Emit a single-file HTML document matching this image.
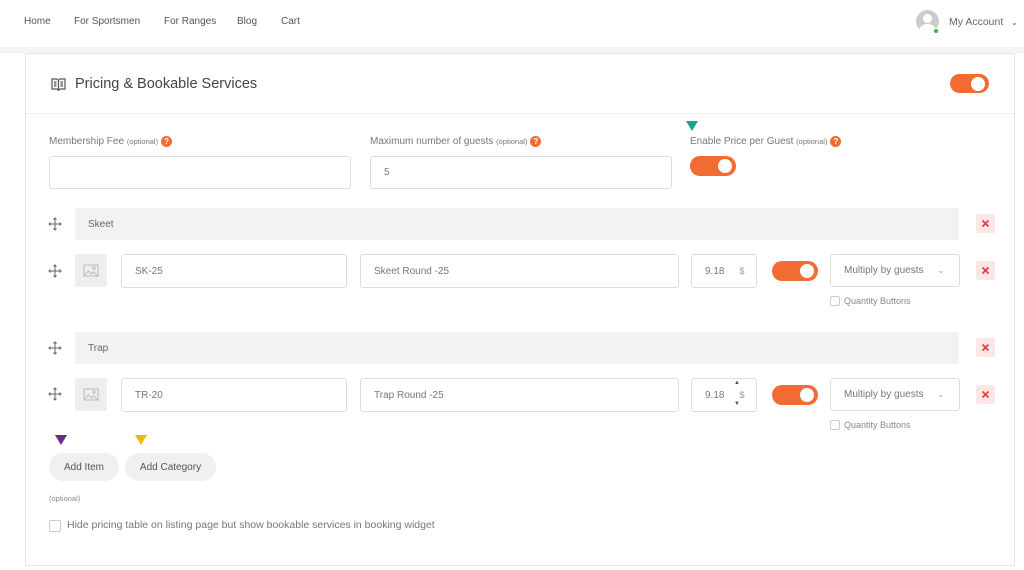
<!DOCTYPE html>
<html><head><style>
*{box-sizing:border-box;margin:0;padding:0}
body{width:1024px;height:570px;background:#fff;font-family:"Liberation Sans",sans-serif;color:#666;position:relative;overflow:hidden}
.a{position:absolute}
.nav{font-size:10px;color:#555;top:16px}
.card{left:25px;top:53px;width:990px;height:513px;border:1px solid #e4e4e4;background:#fff}
.lbl{font-size:10px;color:#777;top:136px}
.lbl small{font-size:7.5px}
.q{display:inline-block;width:11px;height:11px;border-radius:50%;background:#f26b33;color:#fff;font-size:8px;text-align:center;line-height:11px;font-weight:bold;vertical-align:middle;margin-left:3px}
.in{border:1px solid #ddd;border-radius:3px;background:#fff;font-size:10px;color:#777;padding-left:13px;display:flex;align-items:center}
.tg{background:#f26b33;border-radius:10px;width:46px;height:20px}
.tg::after{content:"";position:absolute;right:4px;top:3px;width:14px;height:14px;border-radius:50%;background:#fff}
.bar{background:#f2f2f2;border-radius:2px;font-size:10px;color:#666;padding-left:13px;display:flex;align-items:center;left:75px;width:884px;height:32px}
.x{width:19px;height:19px;background:#fde6e6;border-radius:2px;left:976px}
.img{left:75px;width:32px;height:33px;background:#eee;border-radius:2px}
.drag{left:48px}
.cb{width:10px;height:10px;border:1px solid #ccc;border-radius:2px;background:#fff}
.qb{font-size:9px;color:#888}
.btn{background:#f0f0f0;border-radius:14px;font-size:10px;color:#555;height:28px;display:flex;align-items:center;justify-content:center;top:453px}
.arrow{width:0;height:0;border-left:6px solid transparent;border-right:6px solid transparent;border-top:10px solid}
</style></head><body>
<svg width="0" height="0" style="position:absolute"><defs>
<symbol id="dr" viewBox="0 0 14 14"><path d="M7 1v12M1 7h12M5.5 2.5L7 1l1.5 1.5M5.5 11.5L7 13l1.5-1.5M2.5 5.5L1 7l1.5 1.5M11.5 5.5L13 7l-1.5 1.5" fill="none" stroke="#666" stroke-width="1"/></symbol>
<symbol id="xx" viewBox="0 0 19 19"><path d="M6.5 6.5l6 6M12.5 6.5l-6 6" stroke="#e83838" stroke-width="1.6"/></symbol>
<symbol id="im" viewBox="0 0 32 33"><rect x="9" y="11" width="14" height="11" fill="none" stroke="#bbb" stroke-width="1"/><path d="M9.5 21l4-4 3 3 2-2 4 4" fill="none" stroke="#bbb" stroke-width="1"/><circle cx="19" cy="14" r="1.2" fill="none" stroke="#bbb"/></symbol>
</defs></svg>
<div class="a" style="left:0;top:47px;width:1024px;height:6px;background:#f4f4f4"></div>
<div class="a nav" style="left:24px">Home</div>
<div class="a nav" style="left:74px">For Sportsmen</div>
<div class="a nav" style="left:164px">For Ranges</div>
<div class="a nav" style="left:237px">Blog</div>
<div class="a nav" style="left:281px">Cart</div>
<div class="a" style="left:916px;top:10px;width:23px;height:23px;border-radius:50%;background:#ccc;overflow:hidden"><div class="a" style="left:7px;top:4px;width:9px;height:9px;border-radius:50%;background:#fff"></div><div class="a" style="left:3px;top:14px;width:17px;height:14px;border-radius:50%;background:#fff"></div></div>
<div class="a" style="left:933px;top:28px;width:6px;height:6px;border-radius:50%;background:#3b3;border:1px solid #fff"></div>
<div class="a nav" style="left:949px;color:#666;font-size:10.5px">My Account</div>
<div class="a nav" style="left:1011px;font-size:8px;top:18px">&#8964;</div>

<div class="a card"></div>
<div class="a" style="left:26px;top:113px;width:988px;height:1px;background:#eee"></div>
<svg class="a" style="left:51px;top:77px" width="15" height="14" viewBox="0 0 15 14" fill="none" stroke="#555" stroke-width="1.2"><path d="M1 2h5l1.5 1.5L9 2h5v10H9l-1.5 1.5L6 12H1z M7.5 3.5v10 M3 5h2.5M3 7h2.5M3 9h2.5M9.5 5H12M9.5 7H12M9.5 9H12"/></svg>
<div class="a" style="left:75px;top:76px;font-size:14.5px;color:#444">Pricing &amp; Bookable Services</div>
<div class="a tg" style="left:950px;top:74px;width:39px;height:19px"></div>

<div class="a arrow" style="left:686px;top:121px;border-top-color:#1aa58a"></div>
<div class="a lbl" style="left:49px">Membership Fee <small>(optional)</small><span class="q">?</span></div>
<div class="a lbl" style="left:370px">Maximum number of guests <small>(optional)</small><span class="q">?</span></div>
<div class="a lbl" style="left:690px">Enable Price per Guest <small>(optional)</small><span class="q">?</span></div>
<div class="a in" style="left:49px;top:156px;width:302px;height:33px"></div>
<div class="a in" style="left:370px;top:156px;width:302px;height:33px">5</div>
<div class="a tg" style="left:690px;top:156px"></div>

<svg class="a drag" style="top:217px" width="14" height="14"><use href="#dr"/></svg>
<div class="a bar" style="top:208px">Skeet</div>
<svg class="a x" style="top:214px"><use href="#xx"/></svg>

<svg class="a drag" style="top:264px" width="14" height="14"><use href="#dr"/></svg>
<svg class="a img" style="top:254px"><use href="#im"/></svg>
<div class="a in" style="left:121px;top:254px;width:226px;height:34px">SK-25</div>
<div class="a in" style="left:360px;top:254px;width:319px;height:34px">Skeet Round -25</div>
<div class="a in" style="left:691px;top:254px;width:66px;height:34px">9.18<span style="margin-left:15px;font-size:9px;color:#999">$</span></div>
<div class="a tg" style="left:772px;top:261px"></div>
<div class="a in" style="left:830px;top:254px;width:130px;height:33px">Multiply by guests<span style="margin-left:14px;font-size:8px;color:#999">&#8964;</span></div>
<svg class="a x" style="top:261px"><use href="#xx"/></svg>
<div class="a cb" style="left:830px;top:296px"></div>
<div class="a qb" style="left:844px;top:296px">Quantity Buttons</div>

<svg class="a drag" style="top:341px" width="14" height="14"><use href="#dr"/></svg>
<div class="a bar" style="top:332px">Trap</div>
<svg class="a x" style="top:338px"><use href="#xx"/></svg>

<svg class="a drag" style="top:387px" width="14" height="14"><use href="#dr"/></svg>
<svg class="a img" style="top:378px"><use href="#im"/></svg>
<div class="a in" style="left:121px;top:378px;width:226px;height:34px">TR-20</div>
<div class="a in" style="left:360px;top:378px;width:319px;height:34px">Trap Round -25</div>
<div class="a in" style="left:691px;top:378px;width:66px;height:34px">9.18<span style="margin-left:15px;font-size:9px;color:#999">$</span></div>
<div class="a" style="left:734px;top:380px;font-size:6px;color:#555">&#9650;</div>
<div class="a" style="left:734px;top:401px;font-size:6px;color:#555">&#9660;</div>
<div class="a tg" style="left:772px;top:385px"></div>
<div class="a in" style="left:830px;top:378px;width:130px;height:33px">Multiply by guests<span style="margin-left:14px;font-size:8px;color:#999">&#8964;</span></div>
<svg class="a x" style="top:385px"><use href="#xx"/></svg>
<div class="a cb" style="left:830px;top:420px"></div>
<div class="a qb" style="left:844px;top:420px">Quantity Buttons</div>

<div class="a arrow" style="left:55px;top:435px;border-top-color:#6a2a8a"></div>
<div class="a arrow" style="left:135px;top:435px;border-top-color:#f2b705"></div>
<div class="a btn" style="left:49px;width:70px">Add Item</div>
<div class="a btn" style="left:125px;width:91px">Add Category</div>
<div class="a" style="left:49px;top:494px;font-size:7.5px;color:#888">(optional)</div>
<div class="a cb" style="left:49px;top:520px;width:12px;height:12px"></div>
<div class="a" style="left:67px;top:519px;font-size:10.5px;color:#777">Hide pricing table on listing page but show bookable services in booking widget</div>
</body></html>
